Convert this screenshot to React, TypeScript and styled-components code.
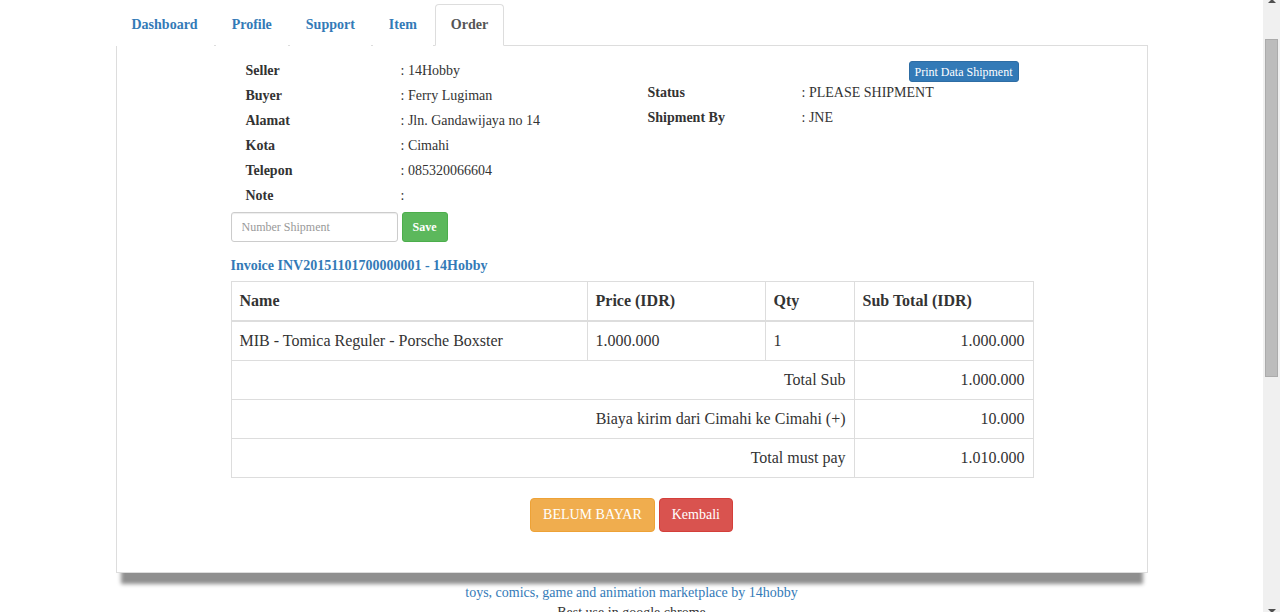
import React from 'react';
import styled, { createGlobalStyle } from 'styled-components';

const GlobalStyle = createGlobalStyle`
  html, body {
    margin: 0;
    padding: 0;
    background: #fff;
  }
  body {
    font-family: 'Liberation Serif', 'Times New Roman', serif;
    font-size: 14px;
    line-height: 20px;
    color: #333;
  }
  * {
    box-sizing: border-box;
  }
`;

const tabs = ['Dashboard', 'Profile', 'Support', 'Item', 'Order'];

const buyerInfo = [
  ['Seller', '14Hobby'],
  ['Buyer', 'Ferry Lugiman'],
  ['Alamat', 'Jln. Gandawijaya no 14'],
  ['Kota', 'Cimahi'],
  ['Telepon', '085320066604'],
  ['Note', ''],
];

const shipInfo = [
  ['Status', 'PLEASE SHIPMENT'],
  ['Shipment By', 'JNE'],
];

const summary = [
  ['Total Sub', '1.000.000'],
  ['Biaya kirim dari Cimahi ke Cimahi (+)', '10.000'],
  ['Total must pay', '1.010.000'],
];

const App: React.FC = () => {
  return (
    <>
      <GlobalStyle />
      <Shell>
        <Main>
          <Page>
            <TabList>
              {tabs.map((t) => (
                <Tab key={t} active={t === 'Order'}>
                  <a>{t}</a>
                </Tab>
              ))}
            </TabList>

            <Panel>
              <Content>
                <InfoGrid>
                  <InfoCol>
                    {buyerInfo.map(([label, value]) => (
                      <InfoRow key={label}>
                        <b>{label}</b>
                        <span>: {value}</span>
                      </InfoRow>
                    ))}
                  </InfoCol>
                  <InfoCol right>
                    <PrintBar>
                      <Button variant="primary" size="xs">
                        Print Data Shipment
                      </Button>
                    </PrintBar>
                    {shipInfo.map(([label, value]) => (
                      <InfoRow key={label} narrow>
                        <b>{label}</b>
                        <span>: {value}</span>
                      </InfoRow>
                    ))}
                  </InfoCol>
                </InfoGrid>

                <ShipForm>
                  <ShipInput placeholder="Number Shipment" />
                  <Button variant="success" size="sm" bold>
                    Save
                  </Button>
                </ShipForm>

                <InvoiceTitle>Invoice INV20151101700000001 - 14Hobby</InvoiceTitle>

                <OrderTable>
                  <colgroup>
                    <col style={{ width: 356 }} />
                    <col style={{ width: 178 }} />
                    <col style={{ width: 89 }} />
                    <col style={{ width: 179 }} />
                  </colgroup>
                  <thead>
                    <tr>
                      <th>Name</th>
                      <th>Price (IDR)</th>
                      <th>Qty</th>
                      <th>Sub Total (IDR)</th>
                    </tr>
                  </thead>
                  <tbody>
                    <tr>
                      <td>MIB - Tomica Reguler - Porsche Boxster</td>
                      <td>1.000.000</td>
                      <td>1</td>
                      <Num>1.000.000</Num>
                    </tr>
                    {summary.map(([label, value]) => (
                      <tr key={label}>
                        <Num colSpan={3}>{label}</Num>
                        <Num>{value}</Num>
                      </tr>
                    ))}
                  </tbody>
                </OrderTable>

                <Actions>
                  <Button variant="warning">BELUM BAYAR</Button>
                  <Button variant="danger">Kembali</Button>
                </Actions>
              </Content>
            </Panel>

            <Footer>
              <FooterLink>toys, comics, game and animation marketplace by 14hobby</FooterLink>
              <div>Best use in google chrome</div>
            </Footer>
          </Page>
        </Main>

        <ScrollTrack>
          <ArrowUp />
          <Thumb />
          <ArrowDown />
        </ScrollTrack>
      </Shell>
    </>
  );
};

const Shell = styled.div`
  display: flex;
  height: 100vh;
  overflow: hidden;
`;

const Main = styled.div`
  flex: 1;
  min-width: 0;
  overflow: hidden;
`;

const Page = styled.div`
  width: 1032px;
  margin: 0 auto;
  padding-top: 4px;
`;

const TabList = styled.ul`
  display: flex;
  list-style: none;
  margin: 0;
  padding: 0;
  border-bottom: 1px solid #ddd;
`;

const Tab = styled.li<{ active?: boolean }>`
  margin-right: 2px;
  margin-bottom: -1px;

  a {
    display: block;
    padding: 10px 15px;
    line-height: 20px;
    font-weight: bold;
    cursor: pointer;
    border: 1px solid ${({ active }) => (active ? '#ddd' : 'transparent')};
    border-bottom-color: ${({ active }) => (active ? '#fff' : 'transparent')};
    border-radius: 4px 4px 0 0;
    background: #fff;
    color: ${({ active }) => (active ? '#555' : '#337ab7')};
  }
`;

const Panel = styled.div`
  border: 1px solid #ddd;
  border-top: 0;
  background: #fff;
  padding: 15px 0 40px;
  box-shadow: 0 16px 4px -5px #8f8f8f;
`;

const Content = styled.div`
  width: 802px;
  margin: 0 auto;
`;

const InfoGrid = styled.div`
  display: grid;
  grid-template-columns: 402px 400px;
`;

const InfoCol = styled.div<{ right?: boolean }>`
  display: flex;
  flex-direction: column;
  padding-right: ${({ right }) => (right ? '14px' : '0')};
`;

const InfoRow = styled.div<{ narrow?: boolean }>`
  display: grid;
  grid-template-columns: ${({ narrow }) => (narrow ? '154px' : '155px')} 1fr;
  padding: 0 0 5px 15px;
  line-height: 20px;

  b {
    font-weight: bold;
  }
`;

const PrintBar = styled.div`
  display: flex;
  justify-content: flex-end;
  height: 23px;
  margin-top: -1px;
  padding-top: 1px;
`;

const Button = styled.button<{
  variant: 'primary' | 'success' | 'warning' | 'danger';
  size?: 'xs' | 'sm';
  bold?: boolean;
}>`
  font-family: inherit;
  cursor: pointer;
  color: #fff;
  border: 1px solid;
  font-weight: ${({ bold }) => (bold ? 'bold' : 'normal')};
  background: ${({ variant }) =>
    ({ primary: '#337ab7', success: '#5cb85c', warning: '#f0ad4e', danger: '#d9534f' }[variant])};
  border-color: ${({ variant }) =>
    ({ primary: '#2e6da4', success: '#4cae4c', warning: '#eea236', danger: '#d43f3a' }[variant])};
  font-size: ${({ size }) => (size ? '12px' : '14px')};
  line-height: ${({ size }) => (size ? '18px' : '20px')};
  padding: ${({ size }) => (size === 'xs' ? '0 5px' : size === 'sm' ? '5px 10px' : '6px 12px')};
  border-radius: ${({ size }) => (size ? '3px' : '4px')};
  height: ${({ size }) => (size === 'xs' ? '21px' : size === 'sm' ? '30px' : '34px')};
`;

const ShipForm = styled.div`
  display: flex;
  gap: 4px;
  margin-top: 1px;
`;

const ShipInput = styled.input`
  width: 167px;
  height: 30px;
  padding: 5px 10px;
  font-family: inherit;
  font-size: 12px;
  color: #555;
  border: 1px solid #ccc;
  border-radius: 3px;
  box-shadow: inset 0 1px 1px rgba(0, 0, 0, 0.075);

  &::placeholder {
    color: #999;
  }
`;

const InvoiceTitle = styled.div`
  margin: 14px 0 5px;
  color: #337ab7;
  font-weight: bold;
  line-height: 20px;
`;

const OrderTable = styled.table`
  width: 802px;
  border-collapse: collapse;
  table-layout: fixed;
  font-size: 16px;
  line-height: 22px;

  th,
  td {
    border: 1px solid #ddd;
    padding: 8px;
    text-align: left;
    vertical-align: top;
  }

  th {
    font-weight: bold;
    border-bottom-width: 2px;
  }
`;

const Num = styled.td`
  && {
    text-align: right;
  }
`;

const Actions = styled.div`
  display: flex;
  justify-content: center;
  gap: 4px;
  margin-top: 20px;
`;

const Footer = styled.div`
  margin-top: 10px;
  text-align: center;
  line-height: 20px;
`;

const FooterLink = styled.div`
  color: #337ab7;
`;

const ScrollTrack = styled.div`
  width: 17px;
  flex: none;
  background: #f0f0f0;
  display: flex;
  flex-direction: column;
  align-items: center;
`;

const ArrowUp = styled.div`
  width: 0;
  height: 0;
  margin-top: -1px;
  border-left: 4px solid transparent;
  border-right: 4px solid transparent;
  border-bottom: 4px solid #505050;
`;

const Thumb = styled.div`
  width: 13px;
  height: 338px;
  margin-top: 36px;
  background: #bcbcbc;
  border: 1px solid #ababab;
`;

const ArrowDown = styled.div`
  width: 0;
  height: 0;
  margin-top: auto;
  margin-bottom: -1px;
  border-left: 4px solid transparent;
  border-right: 4px solid transparent;
  border-top: 4px solid #505050;
`;

export default App;
